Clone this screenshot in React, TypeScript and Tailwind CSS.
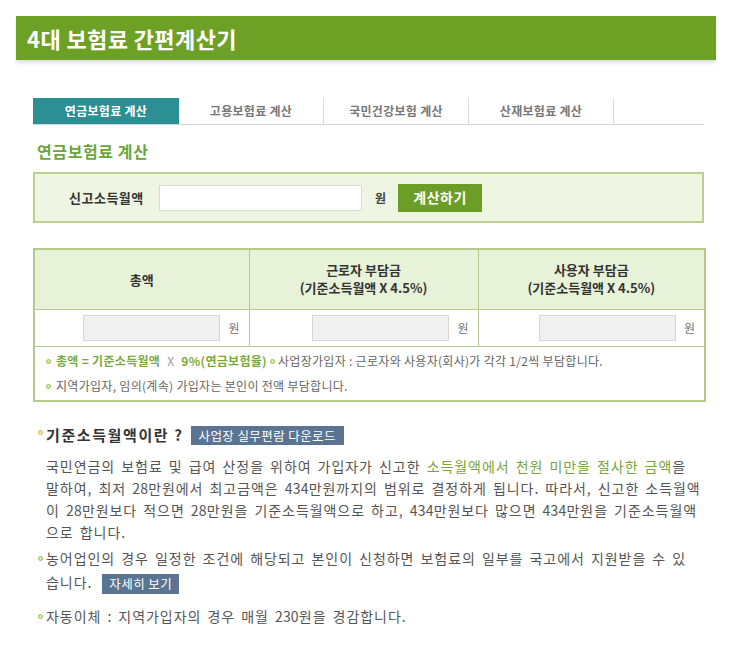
import React from "react";

const KR = { fontFamily: '"Noto Sans CJK KR", "Noto Sans", sans-serif' };

function Bullet({ className = "" }: { className?: string }) {
  return (
    <span
      className={`inline-block w-[5px] h-[5px] rounded-full border border-[#8fbf4a] bg-[#d9ecb8] ${className}`}
    />
  );
}

function N({ children }: { children: React.ReactNode }) {
  return <span className="tracking-[0.2px]">{children}</span>;
}

function AmountCell() {
  return (
    <td className="border border-[#b7cc93] h-[37px] pr-[9px]">
      <div className="flex items-center justify-end gap-[8px]">
        <div className="w-[137px] h-[26px] bg-[#f1f1f1] border border-[#d6d6d6]" />
        <span className="text-[12px] text-[#777]">원</span>
      </div>
    </td>
  );
}

export default function App() {
  const tabs = ["연금보험료 계산", "고용보험료 계산", "국민건강보험 계산", "산재보험료 계산"];
  return (
    <div className="w-[732px] h-[648px] bg-white overflow-hidden" style={KR}>
      <div className="pt-[16px] px-[16px]">
        <div className="h-[44px] bg-[#6ca125] flex items-center pl-[11px] shadow-[0_3px_3px_rgba(0,0,0,0.12)]">
          <span className="text-white text-[22px] font-bold tracking-[0.4px]">4대 보험료 간편계산기</span>
        </div>
      </div>

      <div className="ml-[33px] w-[671px]">
        {/* tabs */}
        <div className="mt-[38px] flex border-b border-[#d4d4d4]">
          {tabs.map((t, i) => (
            <div
              key={t}
              className={
                i === 0
                  ? "w-[146px] h-[26px] flex items-center justify-center bg-[#2b8f93] text-white text-[12px] font-bold tracking-[0.3px]"
                  : "w-[145px] h-[26px] flex items-center justify-center border-r border-[#dcdcdc] text-[#777] text-[12px] font-bold tracking-[0.3px]"
              }
            >
              {t}
            </div>
          ))}
        </div>

        <div className="mt-[16px] pl-[4px] text-[16px] font-bold text-[#6aa63a] leading-[21px] tracking-[0.6px]">
          연금보험료 계산
        </div>

        {/* input box */}
        <div className="mt-[10px] h-[51px] border-2 border-[#bad08f] bg-[#eef5e2] flex items-center">
          <span className="ml-[34px] w-[90px] text-[13px] font-bold text-[#333] tracking-[0.5px]">신고소득월액</span>
          <div className="w-[203px] h-[26px] bg-white border border-[#d9d9d9]" />
          <span className="ml-[13px] text-[12px] font-bold text-[#444]">원</span>
          <button className="ml-[12px] w-[84px] h-[28px] bg-[#6b9d27] text-white text-[14px] font-bold tracking-[0.5px]">
            계산하기
          </button>
        </div>

        {/* table */}
        <table className="mt-[25px] w-[671px] border-collapse border-2 border-[#b3ca88] table-fixed">
          <colgroup>
            <col className="w-[215px]" />
            <col className="w-[229px]" />
            <col className="w-[227px]" />
          </colgroup>
          <tbody>
            <tr className="bg-[#e8f2d9] h-[60px]">
              <td className="border border-[#b7cc93] text-center text-[13px] font-bold text-[#333]">총액</td>
              <td className="border border-[#b7cc93] text-center text-[13px] font-bold text-[#333] leading-[18px]">
                근로자 부담금
                <br />
                (기준소득월액 X 4.5%)
              </td>
              <td className="border border-[#b7cc93] text-center text-[13px] font-bold text-[#333] leading-[18px]">
                사용자 부담금
                <br />
                (기준소득월액 X 4.5%)
              </td>
            </tr>
            <tr>
              <AmountCell />
              <AmountCell />
              <AmountCell />
            </tr>
            <tr>
              <td colSpan={3} className="border border-[#b7cc93] h-[55px] pl-[11px] text-[12px] text-[#666] tracking-[0.3px]">
                <div className="flex items-center h-[21px] mt-[1px] whitespace-nowrap">
                  <Bullet className="mr-[5px]" />
                  <span className="text-[#7aab3a] font-bold">총액 = 기준소득월액</span>
                  <span className="text-[#999] mx-[7px]">X</span>
                  <span className="text-[#7aab3a] font-bold">9%(연금보험율)</span>
                  <Bullet className="mx-[3px]" />
                  <span>사업장가입자 : 근로자와 사용자(회사)가 각각 1/2씩 부담합니다.</span>
                </div>
                <div className="flex items-center h-[21px] mt-[4px] whitespace-nowrap">
                  <Bullet className="mr-[5px]" />
                  <span>지역가입자, 임의(계속) 가입자는 본인이 전액 부담합니다.</span>
                </div>
              </td>
            </tr>
          </tbody>
        </table>

        {/* info section */}
        <div className="mt-[23px] pl-[5px]">
          <div className="flex items-center h-[20px]">
            <Bullet className="mr-[3px] -mt-[6px] border-[#d3b94a] bg-[#f2e7a6]" />
            <span className="text-[15px] font-bold text-[#333] tracking-[1.6px]">기준소득월액이란 ?</span>
            <span className="ml-[7px] h-[19px] px-[8px] bg-[#5b7492] text-white text-[12.5px] leading-[19px] tracking-[0.4px]">
              사업장 실무편람 다운로드
            </span>
          </div>

          <p className="mt-[10px] ml-[8px] text-[14px] leading-[22px] text-[#555] tracking-[0.95px] [word-spacing:2px] whitespace-nowrap">
            국민연금의 보험료 및 급여 산정을 위하여 가입자가 신고한{" "}
            <span className="text-[#79a33c]">소득월액에서 천원 미만을 절사한 금액</span>을
            <br />
            말하여, 최저 <N>28</N>만원에서 최고금액은 <N>434</N>만원까지의 범위로 결정하게 됩니다. 따라서, 신고한 소득월액
            <br />
            이 <N>28</N>만원보다 적으면 <N>28</N>만원을 기준소득월액으로 하고, <N>434</N>만원보다 많으면 <N>434</N>만원을 기준소득월액
            <br />
            으로 합니다.
          </p>

          <div className="mt-[3px] flex text-[14px] leading-[24px] text-[#555] tracking-[0.95px] [word-spacing:2px] whitespace-nowrap">
            <Bullet className="mt-[10px] mr-[3px] shrink-0" />
            <div>
              농어업인의 경우 일정한 조건에 해당되고 본인이 신청하면 보험료의 일부를 국고에서 지원받을 수 있
              <br />
              습니다.
              <span className="ml-[10px] inline-block h-[20px] px-[7px] bg-[#5b7492] text-white text-[12.5px] leading-[20px] tracking-[0.4px] [word-spacing:0px] align-middle">
                자세히 보기
              </span>
            </div>
          </div>

          <div className="mt-[10px] flex text-[14px] leading-[24px] text-[#555] tracking-[0.95px] [word-spacing:2px]">
            <Bullet className="mt-[10px] mr-[3px] shrink-0" />
            <div>
              자동이체 : 지역가입자의 경우 매월 <N>230</N>원을 경감합니다.
            </div>
          </div>
        </div>
      </div>
    </div>
  );
}
